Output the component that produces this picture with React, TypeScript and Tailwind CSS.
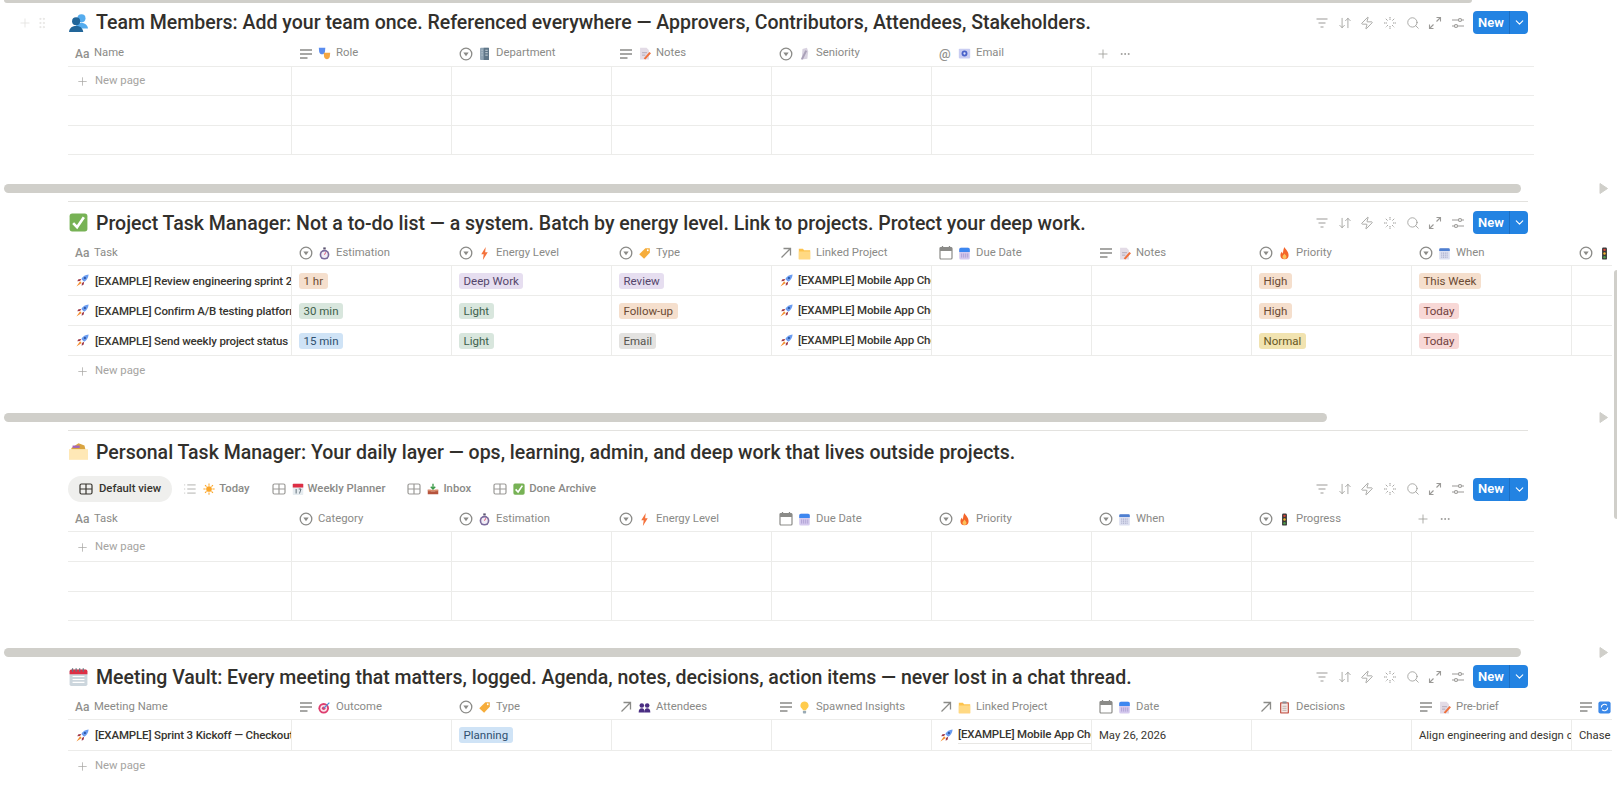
import { ChevronDown, Plus, Search, ArrowDownUp, Zap, MoreHorizontal, GripVertical, List } from "lucide-react";
import type { ReactNode } from "react";

type EmojiName =
  | "team" | "check" | "folderOpen" | "calendar" | "masks" | "building" | "memo" | "ring" | "mail"
  | "watch" | "bolt" | "tag" | "folder" | "dueCal" | "fire" | "whenCal" | "light" | "sun" | "tear"
  | "inbox" | "rocket" | "target" | "people" | "bulb" | "clip" | "refresh";

function Emoji({ name, size = 14 }: { name: EmojiName; size?: number }) {
  const art: Record<EmojiName, ReactNode> = {
    team: (
      <>
        <circle cx="10.500" cy="4.500" r="3.400" fill="#55acee" />
        <path d="M5 13c.5-3 3-4.500 5.500-4.500S15.500 10 16 13z" fill="#55acee" />
        <circle cx="6" cy="7" r="3.400" fill="#226699" />
        <path d="M0 16c.3-3.600 3-5 6-5s5.500 1.400 6 5z" fill="#226699" />
      </>
    ),
    check: (
      <>
        <rect x="0.500" y="0.500" width="15" height="15" rx="2.200" fill="#77b255" />
        <path d="M3.500 8.500 6.800 12 12.500 3.500" stroke="#fff" strokeWidth="2.200" fill="none" />
      </>
    ),
    folderOpen: (
      <>
        <path d="M2 5 8 1l5 2 1 4H2z" fill="#d9a441" />
        <rect x="3" y="3" width="6" height="2" fill="#a265b8" />
        <path d="M0 6h16v9H0z" fill="#ffe8b6" />
      </>
    ),
    calendar: (
      <>
        <rect x="0.500" y="2" width="15" height="14" rx="1.500" fill="#ccd6dd" />
        <path d="M.5 3.500A1.500 1.500 0 0 1 2 2h12a1.500 1.500 0 0 1 1.500 1.500V6H.5z" fill="#dd2e44" />
        <path d="M3 1v3M6 1v3M9 1v3M12 1v3" stroke="#66757f" />
        <path d="M3 8h10M3 10.500h10M3 13h10" stroke="#fff" />
      </>
    ),
    masks: (
      <>
        <path d="M1 1h8l-.5 5c-.3 2-2 3-3.500 3S1.800 8 1.500 6z" fill="#5b8def" />
        <path d="M7 7h8l-.5 5c-.3 2-2 3-3.500 3s-3.200-1-3.500-3z" fill="#f5a742" />
      </>
    ),
    building: (
      <>
        <rect x="2.500" y="1" width="11" height="15" rx="1" fill="#8fa3b3" />
        <rect x="7" y="1" width="6.500" height="15" fill="#5f7688" />
        <path d="M4.500 4h1M4.500 7h1M4.500 10h1M9 4h3M9 7h3M9 10h3" stroke="#dfe8ee" />
      </>
    ),
    memo: (
      <>
        <path d="M2.500 1h8l3 3v11.500h-11z" fill="#e3dbe6" />
        <path d="M5 7h6M5 10h4" stroke="#a9a0b0" />
        <path d="M7 14 14 6l2 1.800L9 15.500z" fill="#f0703c" />
      </>
    ),
    ring: (
      <>
        <path d="M5.500 2.500 11 1l1.500 4.500-1 9-7 1z" fill="#d8d2e0" />
        <path d="M3.500 15 9 4l2.200 1L6 15.500z" fill="#aaa1b8" />
      </>
    ),
    mail: (
      <>
        <rect x="1" y="2" width="14" height="12" rx="1" fill="#c9cdf2" />
        <circle cx="8" cy="8" r="3.600" fill="#4a62c9" />
        <circle cx="8" cy="8" r="1.400" fill="#dfe3fb" />
      </>
    ),
    watch: (
      <>
        <rect x="6.500" y="0.500" width="3" height="2.500" fill="#5c5470" />
        <circle cx="8" cy="9.500" r="6" fill="#7a6a9c" />
        <circle cx="8" cy="9.500" r="4" fill="#f1edf6" />
        <path d="M8 9.500 9.500 6.500" stroke="#e0476a" strokeWidth="1.200" />
      </>
    ),
    bolt: <path d="M9.500 0 4 9h3l-1 7 6-9.500H8.800z" fill="#f4723c" />,
    tag: (
      <>
        <path d="M9 1.500h5.500V7L7.500 14.500 1.500 9z" fill="#f6ad3b" />
        <circle cx="12" cy="4" r="1.100" fill="#fff" />
      </>
    ),
    folder: (
      <>
        <path d="M1 2h5l1.500 2H15v11H1z" fill="#fdc34d" />
        <path d="M1 5.500h14V15H1z" fill="#ffd983" />
      </>
    ),
    dueCal: (
      <>
        <rect x="1.500" y="1" width="13" height="14.500" rx="2" fill="#d5c9ee" />
        <path d="M1.500 3a2 2 0 0 1 2-2h9a2 2 0 0 1 2 2v3h-13z" fill="#3d87f0" />
        <path d="M4.500 8v5M7 8v5M9.500 8v5M12 8v5" stroke="#9b8cc7" strokeWidth=".8" />
      </>
    ),
    fire: (
      <>
        <path d="M8 0c1 3 5 5 5 10a5 5 0 0 1-10 0c0-2 1-3.500 2-4.500 0 1.500.5 2 1 2.500C6.500 5 6.500 2.500 8 0z" fill="#f4652a" />
        <path d="M8 8c.6 1.500 2.500 2.500 2.500 4.200a2.500 2.500 0 0 1-5 0C5.500 10.500 7.500 9.500 8 8z" fill="#fbc15c" />
      </>
    ),
    whenCal: (
      <>
        <rect x="1.500" y="1.500" width="13" height="14" rx="1.500" fill="#dcdff0" />
        <path d="M1.500 3A1.500 1.500 0 0 1 3 1.500h10A1.500 1.500 0 0 1 14.500 3v2h-13z" fill="#4f7fd0" />
        <path d="M4 7.500h8M4 10h8M4 12.500h8" stroke="#8f93b8" strokeDasharray="1.200 1" />
      </>
    ),
    light: (
      <>
        <rect x="5" y="0.500" width="6" height="15" rx="1.500" fill="#3a3a3a" />
        <circle cx="8" cy="3.500" r="1.500" fill="#e0453a" />
        <circle cx="8" cy="8" r="1.500" fill="#f5b62e" />
        <circle cx="8" cy="12.500" r="1.500" fill="#4fa04a" />
      </>
    ),
    sun: (
      <>
        <circle cx="8" cy="8" r="3.800" fill="#fba629" />
        <path d="M8 .5v3M8 12.500v3M.5 8h3M12.500 8h3M2.700 2.700l2 2M11.300 11.300l2 2M13.300 2.700l-2 2M4.700 11.300l-2 2" stroke="#fba629" strokeWidth="1.400" />
      </>
    ),
    tear: (
      <>
        <rect x="1" y="1" width="14" height="15" rx="1" fill="#e6ecf0" />
        <path d="M1 2a1 1 0 0 1 1-1h12a1 1 0 0 1 1 1v4H1z" fill="#dd2e44" />
        <path d="M5.500 8v6M9 8h3l-2 6" stroke="#4b5a66" fill="none" strokeWidth="1.100" />
      </>
    ),
    inbox: (
      <>
        <path d="M1 9h4v2h6V9h4v6H1z" fill="#b5533c" />
        <path d="M1 9h14l-.6 2H1.600z" fill="#d98a6a" />
        <path d="M8 1v6M5 5l3 3 3-3" stroke="#3d9b4a" strokeWidth="1.800" fill="none" />
      </>
    ),
    rocket: (
      <>
        <path d="M15.500.5c-4 .3-7 2.200-9 5.500l3.500 3.500c3.300-2 5.200-5 5.500-9z" fill="#6a9cf0" />
        <circle cx="11" cy="5" r="1.300" fill="#2a4f9a" />
        <path d="M6.500 6 3 6.500 1.500 9l3.500-.3zM10 9.500 9.500 13 7 14.500l.3-3.500z" fill="#a03a4a" />
        <path d="M5 9 .5 15.500 7 11z" fill="#f5902e" />
      </>
    ),
    target: (
      <>
        <circle cx="7" cy="9" r="6.500" fill="#dd3d6e" />
        <circle cx="7" cy="9" r="4.200" fill="#fbe3ea" />
        <circle cx="7" cy="9" r="2.200" fill="#dd3d6e" />
        <path d="M7 9 14 2" stroke="#4a8fd8" strokeWidth="1.500" />
      </>
    ),
    people: (
      <>
        <circle cx="4.700" cy="5.500" r="2.800" fill="#4b2e83" />
        <circle cx="11.300" cy="5.500" r="2.800" fill="#4b2e83" />
        <path d="M.8 14c0-3.500 1.500-5 3.900-5s3.300 1.500 3.300 5zM8 14c0-3.500 1-5 3.300-5s3.900 1.500 3.900 5z" fill="#4b2e83" />
      </>
    ),
    bulb: (
      <>
        <path d="M8 .5a5 5 0 0 0-3 9c.6.500 1 1.200 1 2h4c0-.8.400-1.500 1-2a5 5 0 0 0-3-9z" fill="#ffcc4d" />
        <rect x="6" y="12" width="4" height="3.500" rx="1" fill="#99aab5" />
      </>
    ),
    clip: (
      <>
        <rect x="2.500" y="1.500" width="11" height="14" rx="1" fill="#c4574a" />
        <rect x="4" y="3" width="8" height="11" fill="#f4e9e6" />
        <rect x="5.500" y="0.500" width="5" height="2.500" fill="#8a8f96" />
        <path d="M5.500 6.500h5M5.500 9h5M5.500 11.500h5" stroke="#b8a9a4" />
      </>
    ),
    refresh: (
      <>
        <rect x="0.500" y="0.500" width="15" height="15" rx="2.500" fill="#3b88e8" />
        <path d="M4 8a4 4 0 0 1 7-2.600M12 8a4 4 0 0 1-7 2.600" stroke="#fff" strokeWidth="1.300" fill="none" />
      </>
    ),
  };
  return (
    <svg width={size} height={size} viewBox="0 0 16 16" className="shrink-0">
      {art[name]}
    </svg>
  );
}

type Kind = "title" | "select" | "text" | "date" | "relation" | "email";

function TypeIcon({ kind }: { kind: Kind }) {
  if (kind === "title") return <span className="w-[17px] shrink-0 text-[12px] font-medium text-[#91918e]">Aa</span>;
  if (kind === "email") return <span className="w-[14px] shrink-0 text-[13px] font-medium text-[#91918e]">@</span>;
  if (kind === "relation")
    return (
      <svg width="14" height="14" viewBox="0 0 14 14" className="shrink-0" fill="none" stroke="#8b8b88" strokeWidth="1.300">
        <path d="M2.500 11.500 11.500 2.500M4.500 2.500h7v7" />
      </svg>
    );
  if (kind === "select")
    return (
      <svg width="14" height="14" viewBox="0 0 14 14" className="shrink-0">
        <circle cx="7" cy="7" r="5.800" fill="none" stroke="#8b8b88" strokeWidth="1.300" />
        <path d="M4.300 5.600h5.400L7 9.200z" fill="#8b8b88" />
      </svg>
    );
  if (kind === "date")
    return (
      <svg width="14" height="14" viewBox="0 0 14 14" className="shrink-0">
        <path d="M3.500 0v2M10.500 0v2" stroke="#8b8b88" strokeWidth="1.300" />
        <rect x="1" y="1.500" width="12" height="11.500" rx="1" fill="none" stroke="#8b8b88" strokeWidth="1.200" />
        <rect x="1" y="1.500" width="12" height="3.500" fill="#8b8b88" />
      </svg>
    );
  return (
    <svg width="14" height="14" viewBox="0 0 14 14" className="shrink-0">
      <path d="M1 3h12M1 7h12M1 11h7.500" stroke="#8b8b88" strokeWidth="1.300" />
    </svg>
  );
}

function Toolbar() {
  const stroke = "#9b9a97";
  return (
    <div className="flex items-center">
      <div className="flex w-[161px] items-center justify-between pr-[8px] pl-[3px]">
        <svg width="14" height="14" viewBox="0 0 14 14"><path d="M1.500 3h11M3.500 7h7M5.500 11h3" stroke={stroke} strokeWidth="1.100" /></svg>
        <ArrowDownUp className="size-[14px]" color={stroke} strokeWidth={1.4} />
        <Zap className="size-[14px]" color={stroke} strokeWidth={1.4} />
        <svg width="14" height="14" viewBox="0 0 14 14">
          <path d="M7 1v3M7 10v3M1 7h3M10 7h3M2.800 2.800l2 2M9.200 9.200l2 2M11.200 2.800l-2 2M4.800 9.200l-2 2" stroke={stroke} strokeWidth="1" strokeDasharray="1.500 .6" />
        </svg>
        <Search className="size-[14px]" color={stroke} strokeWidth={1.4} />
        <svg width="14" height="14" viewBox="0 0 14 14" fill="none" stroke={stroke} strokeWidth="1.100">
          <path d="M8.500 1.500h4v4M12.500 1.500 8.500 5.500M5.500 12.500h-4v-4M1.500 12.500l4-4" />
        </svg>
        <svg width="14" height="14" viewBox="0 0 14 14" fill="none" stroke={stroke} strokeWidth="1.100">
          <path d="M1 4h12M1 10h12" />
          <circle cx="9" cy="4" r="1.500" fill="#fff" />
          <circle cx="5" cy="10" r="1.500" fill="#fff" />
        </svg>
      </div>
      <div className="flex h-[23px] w-[55px] items-center rounded-[4px] bg-[#2383e2] text-white">
        <span className="flex h-full w-[37px] items-center justify-center border-r border-[#1b6fc4] text-[13px] font-semibold">New</span>
        <ChevronDown className="mx-auto size-[13px]" strokeWidth={2} />
      </div>
    </div>
  );
}

type Col = { kind: Kind; icon?: EmojiName; label: string };

function HeaderRow({ cols, extras, tall }: { cols: Col[]; extras?: boolean; tall?: boolean }) {
  return (
    <div className={`flex border-b border-[#ececea] pt-[2px] ${tall ? "h-[28px]" : "h-[27px]"}`}>
      {cols.map((c, i) => (
        <div
          key={c.label}
          className={`flex shrink-0 items-center overflow-hidden pl-[7px] text-[11.300px] whitespace-nowrap text-[#8a8a87] ${i === 0 ? "w-[224px]" : "w-[160px] gap-[5px]"}`}
        >
          <TypeIcon kind={c.kind} />
          {c.icon && <Emoji name={c.icon} size={13} />}
          <span className={i === 0 ? "ml-[2px]" : ""}>{c.label}</span>
        </div>
      ))}
      {extras && (
        <div className="flex items-center gap-[9px] pl-[4px] text-[#9b9a97]">
          <Plus className="size-[14px]" strokeWidth={1.4} />
          <MoreHorizontal className="size-[12px]" strokeWidth={2} />
        </div>
      )}
    </div>
  );
}

const tagColors: Record<string, string> = {
  orange: "bg-[#f5dfcd] text-[#6b4a33]",
  purple: "bg-[#e6def0] text-[#55466b]",
  green: "bg-[#d8e6dd] text-[#3f5f4c]",
  blue: "bg-[#cfe3f6] text-[#2f506f]",
  gray: "bg-[#e3e2e0] text-[#55534e]",
  yellow: "bg-[#f1e3b0] text-[#66561f]",
  red: "bg-[#f8d8d6] text-[#70403c]",
};

function Tag({ color, children }: { color: string; children: string }) {
  return <span className={`rounded-[3px] px-[4.500px] py-px text-[11.500px] leading-[14px] whitespace-nowrap ${tagColors[color]}`}>{children}</span>;
}

function Title({ children }: { children: string }) {
  return (
    <div className="flex h-full w-[224px] shrink-0 items-center gap-[6px] overflow-hidden border-r border-[#ececea] pl-[8px] text-[11.500px] font-medium tracking-[-0.150px] whitespace-nowrap text-[#37352f]">
      <Emoji name="rocket" size={13} />
      <span className="pt-[1px]">{children}</span>
    </div>
  );
}

function Cell({ children, clip }: { children?: ReactNode; clip?: boolean }) {
  return (
    <div className={`flex h-full w-[160px] shrink-0 items-center overflow-hidden border-r border-[#ececea] text-[11.300px] whitespace-nowrap text-[#37352f] ${clip ? "pl-[3px]" : "pl-[7px]"}`}>
      {children}
    </div>
  );
}

function Link() {
  return (
    <span className="flex items-center gap-[5px] pl-[5px] text-[11.500px] font-medium tracking-[-0.150px]">
      <Emoji name="rocket" size={13} />
      <span className="border-b border-[#e8e7e4]">[EXAMPLE] Mobile App Checkout Redesign</span>
    </span>
  );
}

function Row({ h, children }: { h: string; children: ReactNode }) {
  return <div className={`flex border-b border-[#ececea] ${h}`}>{children}</div>;
}

function EmptyRows({ cells, h }: { cells: number; h: string }) {
  return (
    <>
      {[0, 1, 2].map((r) => (
        <Row key={r} h={h}>
          <div className="flex h-full w-[224px] shrink-0 items-center border-r border-[#ececea] pt-[1px] pl-[8px] text-[11.300px] text-[#a5a4a1]">
            {r === 0 && (
              <>
                <Plus className="mr-[6px] size-[13px]" strokeWidth={1.300} />
                New page
              </>
            )}
          </div>
          {Array.from({ length: cells }).map((_, c) => (
            <Cell key={c} />
          ))}
        </Row>
      ))}
    </>
  );
}

function NewPage() {
  return (
    <div className="flex h-[30px] items-center pt-[1px] pl-[8px] text-[11.300px] text-[#a5a4a1]">
      <Plus className="mr-[6px] size-[13px]" strokeWidth={1.300} />
      New page
    </div>
  );
}

function Bar({ width }: { width: string }) {
  return (
    <div className="flex h-[9px] items-center">
      <div className="flex w-[1599px] pl-[4px]">
        <div className={`h-[9px] rounded-[5px] bg-[#d0cfca] ${width}`} />
      </div>
      <svg width="9" height="11" viewBox="0 0 9 11"><path d="M1 .5l7.500 5L1 10.500z" fill="#d0cfca" stroke="#d0cfca" strokeLinejoin="round" /></svg>
    </div>
  );
}

function Heading({ icon, children, tools = true }: { icon: EmojiName; children: string; tools?: boolean }) {
  return (
    <div className="flex h-[23px] w-[1460px] items-center justify-between">
      <div className="flex items-center gap-[8px] pl-[1px] text-[19.500px] font-medium whitespace-nowrap text-[#32302c]">
        <Emoji name={icon} size={19} />
        <span className="pt-[1px]">{children}</span>
      </div>
      {tools && <Toolbar />}
    </div>
  );
}

function TableGlyph({ color }: { color: string }) {
  return (
    <svg width="14" height="14" viewBox="0 0 14 14" fill="none" stroke={color} strokeWidth="1.200">
      <rect x="1" y="2" width="12" height="10" rx="1.500" />
      <path d="M1 7h12M7 2v10" />
    </svg>
  );
}

function Tab({ icon, emoji, label, active }: { icon: "table" | "list"; emoji?: EmojiName; label: string; active?: boolean }) {
  return (
    <div className={`flex h-[26px] items-center rounded-full px-[11px] text-[11.300px] font-medium ${active ? "bg-[#efefed] text-[#37352f]" : "text-[#8a8a87]"}`}>
      {icon === "table" ? (
        <TableGlyph color={active ? "#37352f" : "#9b9a97"} />
      ) : (
        <List className="size-[14px] text-[#9b9a97]" strokeWidth={1.3} />
      )}
      {emoji && (
        <span className="ml-[6px] flex">
          <Emoji name={emoji} size={12} />
        </span>
      )}
      <span className={emoji ? "ml-[4px]" : "ml-[6px]"}>{label}</span>
    </div>
  );
}

const teamCols: Col[] = [
  { kind: "title", label: "Name" },
  { kind: "text", icon: "masks", label: "Role" },
  { kind: "select", icon: "building", label: "Department" },
  { kind: "text", icon: "memo", label: "Notes" },
  { kind: "select", icon: "ring", label: "Seniority" },
  { kind: "email", icon: "mail", label: "Email" },
];

const taskCols: Col[] = [
  { kind: "title", label: "Task" },
  { kind: "select", icon: "watch", label: "Estimation" },
  { kind: "select", icon: "bolt", label: "Energy Level" },
  { kind: "select", icon: "tag", label: "Type" },
  { kind: "relation", icon: "folder", label: "Linked Project" },
  { kind: "date", icon: "dueCal", label: "Due Date" },
  { kind: "text", icon: "memo", label: "Notes" },
  { kind: "select", icon: "fire", label: "Priority" },
  { kind: "select", icon: "whenCal", label: "When" },
  { kind: "select", icon: "light", label: "Progress" },
];

const personalCols: Col[] = [
  { kind: "title", label: "Task" },
  { kind: "select", label: "Category" },
  { kind: "select", icon: "watch", label: "Estimation" },
  { kind: "select", icon: "bolt", label: "Energy Level" },
  { kind: "date", icon: "dueCal", label: "Due Date" },
  { kind: "select", icon: "fire", label: "Priority" },
  { kind: "select", icon: "whenCal", label: "When" },
  { kind: "select", icon: "light", label: "Progress" },
];

const meetingCols: Col[] = [
  { kind: "title", label: "Meeting Name" },
  { kind: "text", icon: "target", label: "Outcome" },
  { kind: "select", icon: "tag", label: "Type" },
  { kind: "relation", icon: "people", label: "Attendees" },
  { kind: "text", icon: "bulb", label: "Spawned Insights" },
  { kind: "relation", icon: "folder", label: "Linked Project" },
  { kind: "date", icon: "dueCal", label: "Date" },
  { kind: "relation", icon: "clip", label: "Decisions" },
  { kind: "text", icon: "memo", label: "Pre-brief" },
  { kind: "text", icon: "refresh", label: "Chase" },
];

const tasks = [
  { name: "[EXAMPLE] Review engineering sprint 2 progress", est: ["orange", "1 hr"], energy: ["purple", "Deep Work"], type: ["purple", "Review"], pri: ["orange", "High"], when: ["orange", "This Week"] },
  { name: "[EXAMPLE] Confirm A/B testing platform", est: ["green", "30 min"], energy: ["green", "Light"], type: ["orange", "Follow-up"], pri: ["orange", "High"], when: ["red", "Today"] },
  { name: "[EXAMPLE] Send weekly project status report", est: ["blue", "15 min"], energy: ["green", "Light"], type: ["gray", "Email"], pri: ["yellow", "Normal"], when: ["red", "Today"] },
];

export default function App() {
  return (
    <div className="relative h-[794px] w-[1617px] overflow-hidden bg-white font-['Roboto','Noto_Sans',sans-serif]">
      {/* Team members */}
      <div className="ml-[4px] h-[3px] w-[1468px] rounded-b-[3px] bg-[#d0cfca]" />
      <div className="absolute top-[16px] left-[18px] flex items-center gap-[3px] text-[#e3e2df]">
        <Plus className="size-[14px]" strokeWidth={1.4} />
        <GripVertical className="size-[14px]" strokeWidth={1.4} />
      </div>
      <div className="absolute top-[270px] right-0 h-[249px] w-[3px] rounded-l-[3px] bg-[#d0cfca]" />
      <section className="pt-[8px] pl-[68px]">
        <Heading icon="team">Team Members: Add your team once. Referenced everywhere — Approvers, Contributors, Attendees, Stakeholders.</Heading>
        <div className="mt-[5px] w-[1466px]">
          <HeaderRow cols={teamCols} extras tall />
          <EmptyRows cells={5} h="h-[29.400px]" />
        </div>
      </section>

      {/* Project tasks */}
      <div className="mt-[29px]"><Bar width="w-[1517px]" /></div>
      <section className="pl-[68px]">
        <div className="mt-[8px] mb-[9px] h-px w-[1460px] bg-[#e3e2df]" />
        <Heading icon="check">Project Task Manager: Not a to-do list — a system. Batch by energy level. Link to projects. Protect your deep work.</Heading>
        <div className="mt-[5px] w-[1544px] overflow-hidden">
          <div className="w-[1800px]">
            <HeaderRow cols={taskCols} />
            {tasks.map((t) => (
              <Row key={t.name} h="h-[30px]">
                <Title>{t.name}</Title>
                <Cell><Tag color={t.est[0]}>{t.est[1]}</Tag></Cell>
                <Cell><Tag color={t.energy[0]}>{t.energy[1]}</Tag></Cell>
                <Cell><Tag color={t.type[0]}>{t.type[1]}</Tag></Cell>
                <Cell clip><Link /></Cell>
                <Cell />
                <Cell />
                <Cell><Tag color={t.pri[0]}>{t.pri[1]}</Tag></Cell>
                <Cell><Tag color={t.when[0]}>{t.when[1]}</Tag></Cell>
                <Cell />
              </Row>
            ))}
          </div>
          <NewPage />
        </div>
      </section>

      {/* Personal tasks */}
      <div className="mt-[27px]"><Bar width="w-[1323px]" /></div>
      <section className="pl-[68px]">
        <div className="mt-[8px] mb-[9px] h-px w-[1460px] bg-[#e3e2df]" />
        <Heading icon="folderOpen" tools={false}>Personal Task Manager: Your daily layer — ops, learning, admin, and deep work that lives outside projects.</Heading>
        <div className="mt-[13px] flex h-[26px] w-[1460px] items-center justify-between">
          <div className="flex items-center">
            <Tab icon="table" label="Default view" active />
            <Tab icon="list" emoji="sun" label="Today" />
            <Tab icon="table" emoji="tear" label="Weekly Planner" />
            <Tab icon="table" emoji="inbox" label="Inbox" />
            <Tab icon="table" emoji="check" label="Done Archive" />
          </div>
          <Toolbar />
        </div>
        <div className="mt-[3px] w-[1466px]">
          <HeaderRow cols={personalCols} extras />
          <EmptyRows cells={7} h="h-[29.700px]" />
        </div>
      </section>

      {/* Meetings */}
      <div className="mt-[27px]"><Bar width="w-[1517px]" /></div>
      <section className="pl-[68px]">
        <div className="mt-[8px]"><Heading icon="calendar">Meeting Vault: Every meeting that matters, logged. Agenda, notes, decisions, action items — never lost in a chat thread.</Heading></div>
        <div className="mt-[5px] w-[1544px] overflow-hidden">
          <div className="w-[1800px]">
            <HeaderRow cols={meetingCols} />
            <Row h="h-[31px]">
              <Title>[EXAMPLE] Sprint 3 Kickoff — Checkout Flow</Title>
              <Cell />
              <Cell><Tag color="blue">Planning</Tag></Cell>
              <Cell />
              <Cell />
              <Cell clip><Link /></Cell>
              <Cell><span className="pt-[2px]">May 26, 2026</span></Cell>
              <Cell />
              <Cell><span className="pt-[2px]">Align engineering and design on scope for the sprint</span></Cell>
              <Cell><span className="pt-[2px]">Chase</span></Cell>
            </Row>
          </div>
          <NewPage />
        </div>
      </section>
    </div>
  );
}
